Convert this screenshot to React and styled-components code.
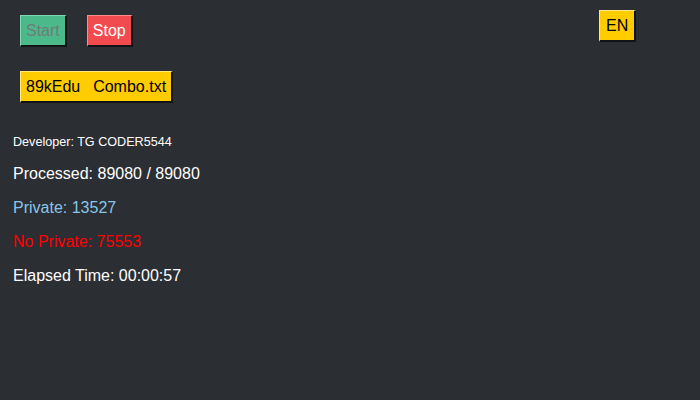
import React from "react";
import styled, { createGlobalStyle } from "styled-components";

const Global = createGlobalStyle`
  html, body { margin: 0; padding: 0; background: #2b2e33; }
  body { font-family: "Liberation Sans", Arial, sans-serif; color: #ffffff; }
  #root { min-height: 400px; }
`;

const Page = styled.div`
  position: relative;
  min-height: 400px;
  box-sizing: border-box;
  padding: 15px 13px;
  display: flex;
  flex-direction: column;
  align-items: flex-start;
`;

const ButtonRow = styled.div`
  display: flex;
  gap: 20px;
  margin-left: 7px;
`;

const FileRow = styled.div`
  margin: 24px 0 0 7px;
`;

const Btn = styled.button`
  font-family: "Liberation Sans", Arial, sans-serif;
  font-size: 16px;
  line-height: normal;
  padding: 5px 5px;
  margin: 0;
  border-style: solid;
  border-width: 1px 2px 2px 1px;
  border-color: ${(p) => p.$light} #111316 #111316 ${(p) => p.$light};
  background: ${(p) => p.$bg};
  color: ${(p) => p.$fg};
  white-space: pre;
  word-spacing: ${(p) => p.$spacing || "0"};
  cursor: pointer;
  box-sizing: border-box;
  height: 32px;
`;

const LangButton = styled(Btn)`
  position: absolute;
  top: 10px;
  left: 599px;
  padding: 5px 6px;
`;

const Stats = styled.div`
  margin-top: 32px;
  display: flex;
  flex-direction: column;
  gap: 16px;
`;

const Developer = styled.p`
  margin: 0;
  font-size: 12.6px;
  color: #ffffff;
`;

const Line = styled.p`
  margin: 0;
  font-size: 16px;
  color: ${(p) => p.$color || "#ffffff"};
`;

export default function App() {
  return (
    <>
      <Global />
      <Page>
        <ButtonRow>
          <Btn $bg="#4cb98a" $light="#7fd8b0" $fg="#6d7e76" disabled>
            Start
          </Btn>
          <Btn $bg="#f24b4f" $light="#ff8a8c" $fg="#ffffff">
            Stop
          </Btn>
        </ButtonRow>
        <LangButton $bg="#ffcc00" $light="#ffe680" $fg="#000000">
          EN
        </LangButton>
        <FileRow>
          <Btn $bg="#ffcc00" $light="#ffe680" $fg="#000000" $spacing="2px">
            {"89kEdu  Combo.txt"}
          </Btn>
        </FileRow>
        <Stats>
          <Developer>Developer: TG CODER5544</Developer>
          <Line>Processed: 89080 / 89080</Line>
          <Line $color="#87c6e8">Private: 13527</Line>
          <Line $color="#ff0000">No Private: 75553</Line>
          <Line>Elapsed Time: 00:00:57</Line>
        </Stats>
      </Page>
    </>
  );
}
